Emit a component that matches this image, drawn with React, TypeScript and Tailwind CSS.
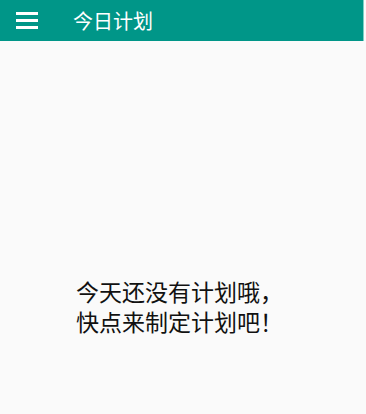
import React from "react";

export default function App() {
  const font = { fontFamily: '"Noto Sans CJK SC", "Noto Sans", sans-serif' };
  return (
    <div className="w-[366px] h-[414px] bg-[#fafafa] flex flex-col" style={font}>
      <div className="w-[364px] h-[41px] bg-[#009688] border-r border-[#7fcfc6] flex items-center shrink-0">
        <div className="ml-[16px] w-[22px] flex flex-col gap-[4px]">
          <div className="h-[3px] bg-white" />
          <div className="h-[3px] bg-white" />
          <div className="h-[3px] bg-white" />
        </div>
        <div className="ml-[35px] text-[20px] leading-[24px] text-white">今日计划</div>
      </div>
      <div className="pt-[235px] pl-[76px] text-[23px] leading-[30px] text-[#111111]">
        <p>
          今天还没有计划哦，
          <br />
          快点来制定计划吧！
        </p>
      </div>
    </div>
  );
}
